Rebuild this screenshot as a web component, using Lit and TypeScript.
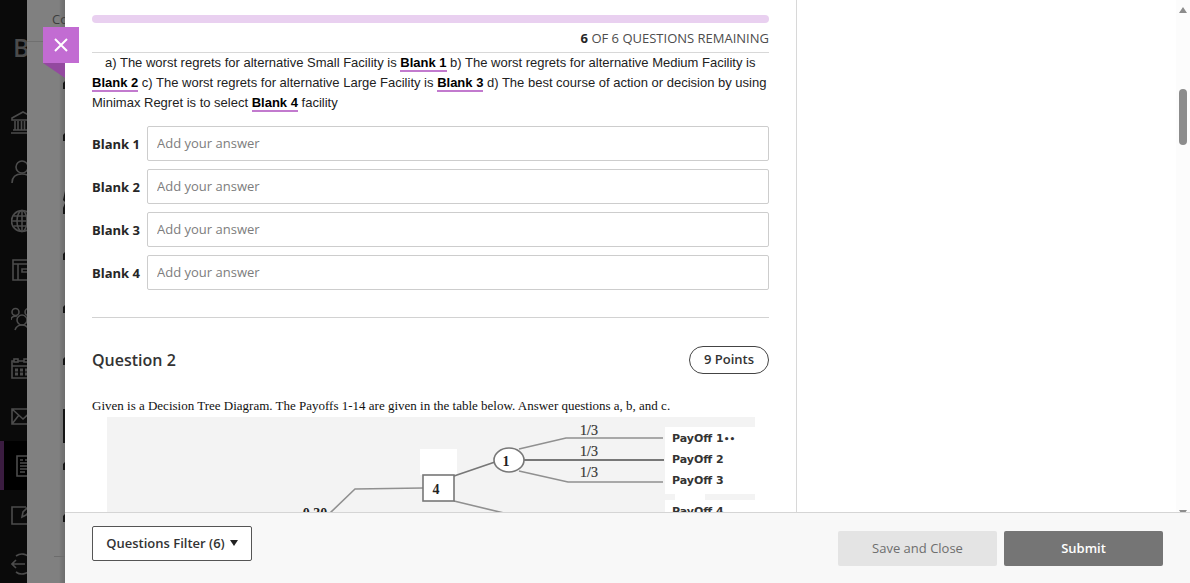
import { LitElement, html, css, svg } from "lit";
import { customElement, property } from "lit/decorators.js";

const NAV = [
  { label: "Institution Page", icon: svg`<path d="M1 7 12 1l11 6v2H1zM4 10v9M7 10v9M10.500 10v9M13.500 10v9M17 10v9M20 10v9M2 19h20M0 22h24"/>` },
  { label: "Profile", icon: svg`<circle cx="11" cy="7" r="6"/><path d="M1 23c0-6 4-9 10-9s10 3 10 9"/>` },
  { label: "Activity Stream", icon: svg`<circle cx="11" cy="12" r="10.500"/><ellipse cx="11" cy="12" rx="5" ry="10.500"/><path d="M11 1v22M1 12h20M2.500 7h17M2.500 17h17"/>` },
  { label: "Courses", icon: svg`<path d="M2 2h20v20H2zM2 6h20M7 6v16M11 11h9v3h-9z"/>` },
  { label: "Organizations", icon: svg`<circle cx="4.500" cy="5" r="3.500"/><circle cx="17.500" cy="5" r="3.500"/><circle cx="11" cy="13" r="5"/><path d="M0 13c0-3 2-4 6-4M22 13c0-3-2-4-6-4M4 23c1-3 3-5 7-5s6 2 7 5"/>` },
  { label: "Calendar", icon: svg`<path d="M3 5H1v17h22V5h-2M7 5h6M1 10h22"/><rect x="3" y="3" width="4" height="3"/><rect x="13" y="3" width="4" height="3"/><path d="M4 14h3M9 14h3M14 14h3M4 18h3M9 18h3M14 18h3" stroke-width="3"/>` },
  { label: "Messages", icon: svg`<path d="M1 4h22v15H1zM1 4l11 10L23 4M1 19l7-9M23 19l-7-9"/>` },
  { label: "Grades", current: true, icon: svg`<path d="M6 2h18v20H6zM9 6h3M14 6h8M9 9h13M9 12h13M9 15h7M9 18h5"/>` },
  { label: "Tools", icon: svg`<path d="M15 4H1v17h18v-7M11 14l1-5 8-8 3 3-8 8z"/>` },
  { label: "Sign Out", icon: svg`<path d="M1 12h13M5 8l-4 4 4 4M5 4a10 10 0 0 1 14 2M5 20a10 10 0 0 0 14-2"/>` },
];

@customElement("side-nav")
export class SideNav extends LitElement {
  static styles = css`
    :host { display: block; background: #0a0a0a; overflow: hidden; }
    .logo { box-sizing: border-box; height: 98px; padding: 24px 0 0 13px;
      font: 600 25px/46px "Open Sans", sans-serif; color: #4b4b4b; }
    .list { list-style: none; margin: 0; padding: 0; }
    .item { display: flex; align-items: center; height: 49px; width: 60px; box-sizing: border-box; padding-left: 11px; }
    .item.current { background: #000; border-left: 4px solid #3a1c40; padding-left: 7px; }
    svg { width: 24px; height: 24px; fill: none; stroke: #4c4c4c; stroke-width: 1.600; display: block; }
  `;
  render() {
    return html`<div class="logo">B</div>
      <ul class="list">
        ${NAV.map((n) => html`<li><a class="item ${n.current ? "current" : ""}" href="#" aria-label=${n.label}>
          <svg viewBox="0 0 24 24" aria-hidden="true">${n.icon}</svg></a></li>`)}
      </ul>`;
  }
}

@customElement("decision-tree")
export class DecisionTree extends LitElement {
  static styles = css`
    :host { display: block; }
    svg { display: block; width: 100%; max-width: 648px; height: auto; }
    .edge { fill: none; stroke: #909090; stroke-width: 1.600; }
    .dark { stroke: #777; stroke-width: 1.800; }
    .node { fill: #fff; stroke: #777; stroke-width: 1.600; }
    .num { font: 700 14px "Liberation Serif", serif; fill: #222; text-anchor: middle; }
    .prob { font: 14px "Liberation Serif", serif; fill: #333; stroke: #333; stroke-width: .2; }
    .pay { font: 700 11px "DejaVu Sans", sans-serif; fill: #333; }
    .dots { font-size: 9px; }
  `;
  render() {
    return html`<svg viewBox="0 0 648 130" role="img" aria-label="Decision tree">
      <rect width="648" height="130" fill="#f3f3f3"/>
      <path fill="#fff" d="M313 32h37v26h-37zM558 10h90v67h-90zM568 77h30v6h50v47h-90V83h10z"/>
      <path class="edge" d="M223 96 248 72 316 71M347 84 401 97M412 32 459 21H556M412 54 461 65H556"/>
      <path class="edge dark" d="M347 59 388 45M416 43H557"/>
      <rect class="node" x="316" y="58" width="31" height="26"/>
      <ellipse class="node" cx="402" cy="43" rx="15" ry="12"/>
      <text class="num" x="329" y="77">4</text>
      <text class="num" x="399" y="49">1</text>
      <text class="prob" x="473" y="18">1/3</text>
      <text class="prob" x="473" y="39">1/3</text>
      <text class="prob" x="473" y="60">1/3</text>
      <text class="num" x="208" y="101">0.30</text>
      <text class="pay" x="565" y="25">PayOff 1<tspan class="dots">••</tspan></text>
      <text class="pay" x="565" y="46">PayOff 2</text>
      <text class="pay" x="565" y="67">PayOff 3</text>
      <text class="pay" x="565" y="98">PayOff 4</text>
    </svg>`;
  }
}

@customElement("answer-field")
export class AnswerField extends LitElement {
  @property({ type: Number }) index = 1;
  static styles = css`
    :host { display: grid; grid-template-columns: 55px 1fr; align-items: center; }
    label { font-weight: 700; color: #262626; }
    input { box-sizing: border-box; width: 100%; min-width: 0; height: 35px; padding: 0 9px 2px; border: 1px solid #cdcdcd;
      border-radius: 2px; background: #fff; font: inherit; color: #262626; }
    input::placeholder { color: #7d7d7d; opacity: 1; }
  `;
  render() {
    return html`<label for="answer">Blank ${this.index}</label>
      <input id="answer" type="text" placeholder="Add your answer">`;
  }
}

@customElement("app-root")
export class AppRoot extends LitElement {
  static styles = css`
    :host { display: grid; grid-template-columns: 27px 38px minmax(0, 1fr); grid-template-rows: 100vh; overflow: hidden;
      font: 13px/20px "Open Sans", sans-serif; color: #262626; background: #fff; }
    .behind { background: linear-gradient(to right, #808080 32px, #777 34px, #6d6d6d); overflow: hidden;
      display: flex; flex-direction: column; justify-content: space-between; }
    .crumb { height: 42px; box-sizing: border-box; padding: 9px 0 0 25px; color: #3e3e3e; border-bottom: 1px solid #707070; }
    .marks { flex: 1; }
    .marks svg { display: block; width: 38px; height: 514px; }
    .rule { margin: 0 0 26px 27px; border-top: 1px solid #6c6c6c; }
    .panel { position: relative; display: flex; flex-direction: column; min-width: 0; background: #fff; }
    .close { position: absolute; left: -22px; top: 27px; width: 36px; height: 36px; padding: 0; border: 0; background: #c26cd2;
      display: grid; place-items: center; }
    .close svg { width: 14px; height: 14px; stroke: #fff; stroke-width: 2; }
    .fold { position: absolute; left: -22px; top: 63px; width: 22px; height: 15px; background: #93499f;
      clip-path: polygon(0 0, 100% 0, 100% 100%); }
    .view { flex: 1; min-height: 0; display: flex; }
    .scroll { flex: 1; min-width: 0; overflow: hidden; }
    .content { box-sizing: border-box; width: 100%; max-width: 732px; min-height: 100%; padding: 15px 27px 0; border-right: 1px solid #d8d8d8; }
    .progress { height: 8px; border-radius: 4px; background: #e9d0f0; }
    .remaining { margin: 0; padding: 5px 0 4px; border-bottom: 1px solid #d8d8d8; text-align: right; color: #4d4d4d; }
    .remaining b { color: #262626; }
    .prompt { margin: 0; font-family: "Liberation Sans", sans-serif; color: #222; text-indent: 13px; }
    .prompt b { color: #000; border-bottom: 2px solid #c27ace; }
    .answers { display: grid; gap: 8px; padding: 13px 0 27px; border-bottom: 1px solid #d2d2d2; }
    .head { display: flex; align-items: center; justify-content: space-between; padding: 28px 0 22px; }
    h2 { margin: 0; font-size: 16px; line-height: 24px; font-weight: 600; color: #333; }
    .points { box-sizing: border-box; height: 28px; padding: 2px 14px; border: 1px solid #444; border-radius: 14px; font-weight: 600; color: #333; }
    .given { margin: 0; font: 13px/20px "Liberation Serif", serif; color: #111; }
    decision-tree { margin: 1px 0 0 15px; }
    .bar { width: 14px; box-sizing: border-box; background: #fcfcfc; overflow: hidden; }
    .bar svg { display: block; width: 14px; height: 520px; }
    .footer { display: flex; align-items: flex-start; gap: 7px; box-sizing: border-box; height: 71px; padding: 13px 27px 0;
      border-top: 1px solid #d5d5d5; background: #f8f8f8; }
    .btn { box-sizing: border-box; height: 35px; width: 159px; margin: 5px 0 0; padding: 0 0 2px; border: 0; border-radius: 2px; font: inherit; }
    .filter { width: 160px; margin: 0 auto 0 0; border: 1px solid #555; background: #fff; color: #333; font-weight: 600;
      display: flex; align-items: center; justify-content: center; gap: 5px; }
    .filter svg { width: 8px; height: 6px; fill: #222; }
    .save { background: #e4e4e4; color: #6e6e6e; }
    .submit { background: #757575; color: #fff; font-weight: 600; }
  `;
  render() {
    return html`
      <side-nav></side-nav>
      <div class="behind">
        <div class="crumb">Co</div>
        <div class="marks"><svg viewBox="0 41 38 514" fill="#151515" aria-hidden="true">
          <path d="M38 80l-2 2v6h2zM38 132l-2 2v6h2zM38 190l-2 9 2 2zM38 202l-2 5v6h2zM38 251l-2 2v6h2zM38 304l-2 2v6h2zM38 356l-2 2v6h2zM36 408h2v34h-2zM38 461l-2 2v6h2zM38 513l-2 2v6h2z"/>
        </svg></div>
        <div class="rule"></div>
      </div>
      <main class="panel">
        <div class="view">
          <div class="scroll"><div class="content">
            <div class="progress" role="progressbar" aria-valuenow="0" aria-valuemax="6" aria-label="Progress"></div>
            <p class="remaining"><b>6</b> OF 6 QUESTIONS REMAINING</p>
            <p class="prompt">a) The worst regrets for alternative Small Facility is <b>Blank 1</b> b) The worst regrets for alternative Medium Facility is <b>Blank 2</b> c) The worst regrets for alternative Large Facility is <b>Blank 3</b> d) The best course of action or decision by using Minimax Regret is to select <b>Blank 4</b> facility</p>
            <div class="answers">${[1, 2, 3, 4].map((i) => html`<answer-field .index=${i}></answer-field>`)}</div>
            <div class="head"><h2>Question 2</h2><span class="points">9 Points</span></div>
            <p class="given">Given is a Decision Tree Diagram. The Payoffs 1-14 are given in the table below. Answer questions a, b, and c.</p>
            <decision-tree></decision-tree>
          </div></div>
          <div class="bar"><svg viewBox="0 0 14 520" fill="#8c8c8c" aria-hidden="true">
            <path d="M3 13 7 7l4 6zM3 510h8l-4 6z"/><rect x="3" y="89" width="8" height="56" rx="4"/></svg></div>
        </div>
        <footer class="footer">
          <button class="btn filter" type="button">Questions Filter (6)
            <svg viewBox="0 0 8 6" aria-hidden="true"><path d="M0 0h8L4 6z"/></svg></button>
          <button class="btn save" type="button">Save and Close</button>
          <button class="btn submit" type="button">Submit</button>
        </footer>
        <div class="fold"></div>
        <button class="close" type="button" aria-label="Close"><svg viewBox="0 0 14 14"><path d="M1 1l12 12M13 1 1 13"/></svg></button>
      </main>`;
  }
}
